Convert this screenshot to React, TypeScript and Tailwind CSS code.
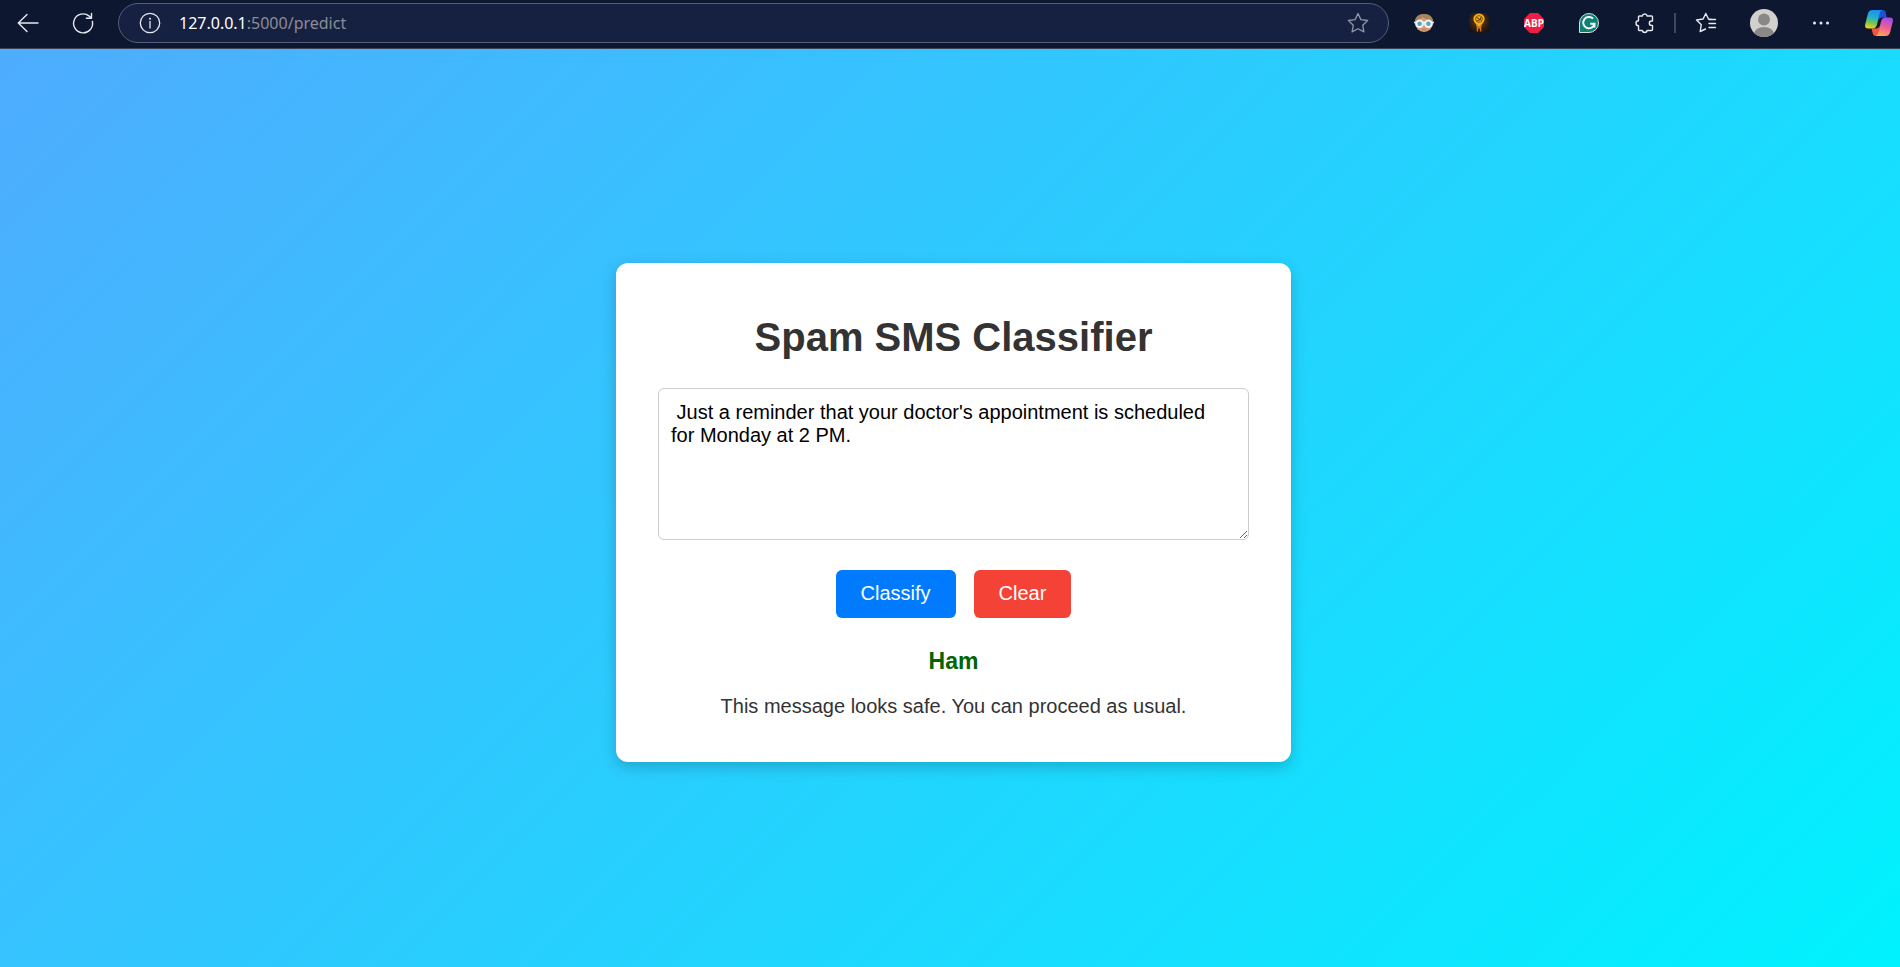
import React, { useState } from "react";

const iconButton = "flex shrink-0 items-center justify-center";

function BackIcon() {
  return (
    <svg width="24" height="24" viewBox="0 0 24 24" fill="none" stroke="#e6e9f0" strokeWidth="1.4" strokeLinecap="round" strokeLinejoin="round">
      <path d="M22 12H2.300M11 3.500L2.300 12L11 20.500" />
    </svg>
  );
}

function ReloadIcon() {
  return (
    <svg width="24" height="24" viewBox="0 0 24 24" fill="none" stroke="#e6e9f0" strokeWidth="1.400" strokeLinecap="round" strokeLinejoin="round">
      <path d="M21.400 10.500A9.500 9.500 0 1 1 18.200 5.100L20.300 7.200M20.500 2.500V7.200H15.300" />
    </svg>
  );
}

function InfoIcon() {
  return (
    <svg width="22" height="22" viewBox="0 0 22 22" fill="none" stroke="#e6e9f0" strokeWidth="1.300">
      <circle cx="11" cy="11" r="9.700" />
      <path d="M11 9.500V16" strokeLinecap="round" />
      <circle cx="11" cy="6.700" r="1" fill="#e6e9f0" stroke="none" />
    </svg>
  );
}

function StarIcon() {
  return (
    <svg width="22" height="22" viewBox="0 0 22 22" fill="none" stroke="#8f96a6" strokeWidth="1.300" strokeLinejoin="round">
      <path d="M11 1.500L13.900 7.600L20.600 8.500L15.700 13.200L16.900 19.900L11 16.700L5.100 19.900L6.300 13.200L1.400 8.500L8.100 7.600Z" />
    </svg>
  );
}

function FaceIcon() {
  return (
    <svg width="20" height="20" viewBox="0 0 20 20">
      <circle cx="10" cy="10" r="9" fill="#d59a77" />
      <path d="M1 9Q1 1 10 1Q19 1 19 9Q14 8 8.500 4Q6 7.500 1 9Z" fill="#a98359" />
      <path d="M0 9.500H20" stroke="#e8f6fa" strokeWidth="1.500" />
      <circle cx="5.600" cy="10.800" r="3.300" fill="#6b9fb0" stroke="#e8f8fc" strokeWidth="2" />
      <circle cx="14.400" cy="10.800" r="3.300" fill="#6b9fb0" stroke="#e8f8fc" strokeWidth="2" />
      <path d="M8.300 16.500H11.700" stroke="#c4705e" strokeWidth="1" />
    </svg>
  );
}

function BulbIcon() {
  return (
    <svg width="20" height="20" viewBox="0 0 20 20">
      <defs>
        <radialGradient id="bulbGlow" cx="0.5" cy="0.4" r="0.6">
          <stop offset="0" stopColor="#7a4000" />
          <stop offset="1" stopColor="#17131c" />
        </radialGradient>
      </defs>
      <rect width="20" height="20" rx="2" fill="url(#bulbGlow)" />
      <path d="M6.500 10H13.500L12.300 14V18.500H10.900V15.500H9.100V18.500H7.700V14Z" fill="#d9780f" />
      <circle cx="10" cy="6" r="5.600" fill="#f5b31a" />
      <circle cx="10" cy="6" r="3.400" fill="none" stroke="#7a4a08" strokeWidth="0.900" />
      <path d="M7.500 4.500L12.300 7.200M8 7.800Q11 8.500 12.300 4" stroke="#4a2b05" strokeWidth="0.900" fill="none" />
      <path d="M8.500 12H11.500" stroke="#ffd75a" strokeWidth="1" />
    </svg>
  );
}

function AbpIcon() {
  return (
    <svg width="20" height="20" viewBox="0 0 20 20">
      <path d="M5.900 0H14.100L20 5.900V14.100L14.100 20H5.900L0 14.100V5.900Z" fill="#ed1e45" />
      <text x="10" y="13.800" textAnchor="middle" fontFamily="'Liberation Sans Narrow', 'Noto Sans', sans-serif" fontWeight="700" fontSize="10" fill="#fff">ABP</text>
    </svg>
  );
}

function GrammarIcon() {
  return (
    <svg width="20" height="20" viewBox="0 0 20 20">
      <path d="M.5 19.500V10A9.500 9.500 0 1 1 10 19.500Z" fill="#0f8173" stroke="#cfe0df" strokeWidth="1" />
      <path d="M14 5.700A5.700 5.700 0 1 0 15.500 10.800H11.300M15.500 10.800V14.500" fill="none" stroke="#fff" strokeWidth="1.900" />
    </svg>
  );
}

function PuzzleIcon() {
  return (
    <svg width="22" height="22" viewBox="0 0 22 22" fill="none" stroke="#e6e9f0" strokeWidth="1.400" strokeLinejoin="round">
      <path d="M4.500 5A1 1 0 0 1 5.500 4H8.300A2.500 2.500 0 0 1 13.200 4H17.500A1 1 0 0 1 18.500 5V9H17.500A2.200 2.200 0 0 0 17.500 13.400H18.500V17.500A1 1 0 0 1 17.500 18.500H13.200A2.500 2.500 0 0 1 8.300 18.500H5.500A1 1 0 0 1 4.500 17.500V13.700A2.500 2.500 0 0 1 4.500 8.700Z" />
    </svg>
  );
}

function FavoritesIcon() {
  return (
    <svg width="22" height="22" viewBox="0 0 22 22" fill="none" stroke="#e6e9f0" strokeWidth="1.400" strokeLinecap="round" strokeLinejoin="round">
      <path d="M17 7.500L13.500 7L10.800 1.500L8.100 7L1.500 8L6.300 12.700L5.200 19.500L10.500 17M14 7.500H20.500M14 11.500H20.500M14 15.500H20.500" />
    </svg>
  );
}

function AvatarIcon() {
  return (
    <svg width="28" height="28" viewBox="0 0 28 28">
      <defs>
        <clipPath id="avatarClip">
          <circle cx="14" cy="14" r="14" />
        </clipPath>
      </defs>
      <g clipPath="url(#avatarClip)">
        <rect width="28" height="28" fill="#d2d0ce" />
        <circle cx="14" cy="10.500" r="6" fill="#8a8886" />
        <ellipse cx="14" cy="25" rx="10" ry="7" fill="#8a8886" />
      </g>
    </svg>
  );
}

function CopilotIcon() {
  return (
    <svg width="28" height="26" viewBox="0 0 28 26">
      <defs>
        <linearGradient id="cpLeft" x1="0.6" y1="0" x2="0.400" y2="1">
          <stop offset="0" stopColor="#1b8df0" />
          <stop offset="0.400" stopColor="#22b0d0" />
          <stop offset="0.700" stopColor="#6fc455" />
          <stop offset="1" stopColor="#f3cf1b" />
        </linearGradient>
        <linearGradient id="cpRight" x1="0.700" y1="0" x2="0.400" y2="1">
          <stop offset="0" stopColor="#a24bea" />
          <stop offset="0.500" stopColor="#ea5c9c" />
          <stop offset="1" stopColor="#ffa25a" />
        </linearGradient>
      </defs>
      <path d="M13 0H17.500Q20 0 20.600 2L21.800 7.500H17Q14.500 7.500 13.500 10Z" fill="#1f50d8" />
      <path d="M15 26H11Q8.500 26 7.900 24L6.500 18.500H11Q13.500 18.500 14.500 16Z" fill="#f2553b" />
      <path d="M7.500 0H17.500Q15.300 .5 14.500 4L12 14.500Q11 18.500 7.500 18.500H3Q-.6 18.500 .2 14.500L2.800 4Q3.800 0 7.500 0Z" fill="url(#cpLeft)" />
      <path d="M20.500 26H10.500Q12.700 25.500 13.500 22L16 11.500Q17 7.500 20.500 7.500H25Q28.600 7.500 27.800 11.500L25.200 22Q24.200 26 20.500 26Z" fill="url(#cpRight)" />
    </svg>
  );
}

function BrowserBar() {
  return (
    <header className="flex h-[49px] shrink-0 items-center border-b border-[#3a4256] bg-[#0e1730] pb-0.5 pl-4 pr-[7px]">
      <button type="button" aria-label="Back" className={iconButton}>
        <BackIcon />
      </button>
      <button type="button" aria-label="Refresh" className={`${iconButton} ml-[31px]`}>
        <ReloadIcon />
      </button>
      <div className="ml-[23px] flex h-10 min-w-0 flex-1 items-center rounded-full border border-[#555e76] bg-[#162142] pl-5 pr-[19px]">
        <InfoIcon />
        <a href="#predict" className="ml-[18px] flex-1 font-['Noto_Sans','Open_Sans',sans-serif] text-base leading-6 text-[#8b8d94]">
          <span className="text-white">127.0.0.1</span>:5000/predict
        </a>
        <button type="button" aria-label="Add to favorites" className={iconButton}>
          <StarIcon />
        </button>
      </div>
      <nav aria-label="Extensions" className="ml-[25px] flex shrink-0 items-center gap-[35px]">
        <button type="button" aria-label="Glasses extension" className={iconButton}><FaceIcon /></button>
        <button type="button" aria-label="Bulb extension" className={iconButton}><BulbIcon /></button>
        <button type="button" aria-label="Ad blocker" className={iconButton}><AbpIcon /></button>
        <button type="button" aria-label="Grammar" className={iconButton}><GrammarIcon /></button>
        <button type="button" aria-label="Extensions" className={iconButton}><PuzzleIcon /></button>
      </nav>
      <div className="ml-[18px] h-5 w-[2px] shrink-0 bg-[#3f475b]" />
      <div className="ml-[19px] flex shrink-0 items-center">
        <button type="button" aria-label="Favorites" className={iconButton}><FavoritesIcon /></button>
        <button type="button" aria-label="Profile" className={`${iconButton} ml-[33px]`}><AvatarIcon /></button>
        <button type="button" aria-label="Settings and more" className={`${iconButton} ml-8`}>
          <svg width="22" height="22" viewBox="0 0 22 22" fill="#e6e9f0">
            <circle cx="4.500" cy="11" r="1.500" />
            <circle cx="11" cy="11" r="1.500" />
            <circle cx="17.500" cy="11" r="1.500" />
          </svg>
        </button>
        <button type="button" aria-label="Copilot" className={`${iconButton} ml-[33px]`}><CopilotIcon /></button>
      </div>
    </header>
  );
}

export default function App() {
  const [message, setMessage] = useState(
    " Just a reminder that your doctor's appointment is scheduled for Monday at 2 PM."
  );

  return (
    <div className="flex min-h-screen flex-col font-['Liberation_Sans',Arial,sans-serif]">
      <BrowserBar />
      <main className="flex flex-1 items-center justify-center bg-linear-[135deg,#4facfe,#00f2fe] pl-[7px] pt-2">
        <section className="w-full max-w-[675px] rounded-xl bg-white px-[42px] pb-11 pt-[51px] text-center text-[#333] shadow-[0_5px_15px_rgba(0,0,0,0.2)]">
          <h1 className="text-[40px] font-bold leading-[46px]">Spam SMS Classifier</h1>
          <form onSubmit={(e) => e.preventDefault()} className="mt-7">
            <textarea
              aria-label="Message"
              spellCheck={false}
              value={message}
              onChange={(e) => setMessage(e.target.value)}
              className="block h-[152px] w-full resize rounded-md border border-[#ccc] bg-white py-3 pl-3 pr-6 text-xl leading-[23px] text-black outline-none"
            />
            <div className="mt-[30px] flex justify-center gap-[18px]">
              <button type="submit" className="h-12 rounded-md bg-[#007bff] px-[25px] text-xl leading-[23px] text-white">
                Classify
              </button>
              <button type="button" onClick={() => setMessage("")} className="h-12 rounded-md bg-[#f44336] px-[25px] text-xl leading-[23px] text-white">
                Clear
              </button>
            </div>
          </form>
          <h2 className="mt-[30px] text-[23px] font-bold leading-[26px] text-[#006400]">Ham</h2>
          <p className="mt-[21px] text-xl leading-[23px]">This message looks safe. You can proceed as usual.</p>
        </section>
      </main>
    </div>
  );
}
